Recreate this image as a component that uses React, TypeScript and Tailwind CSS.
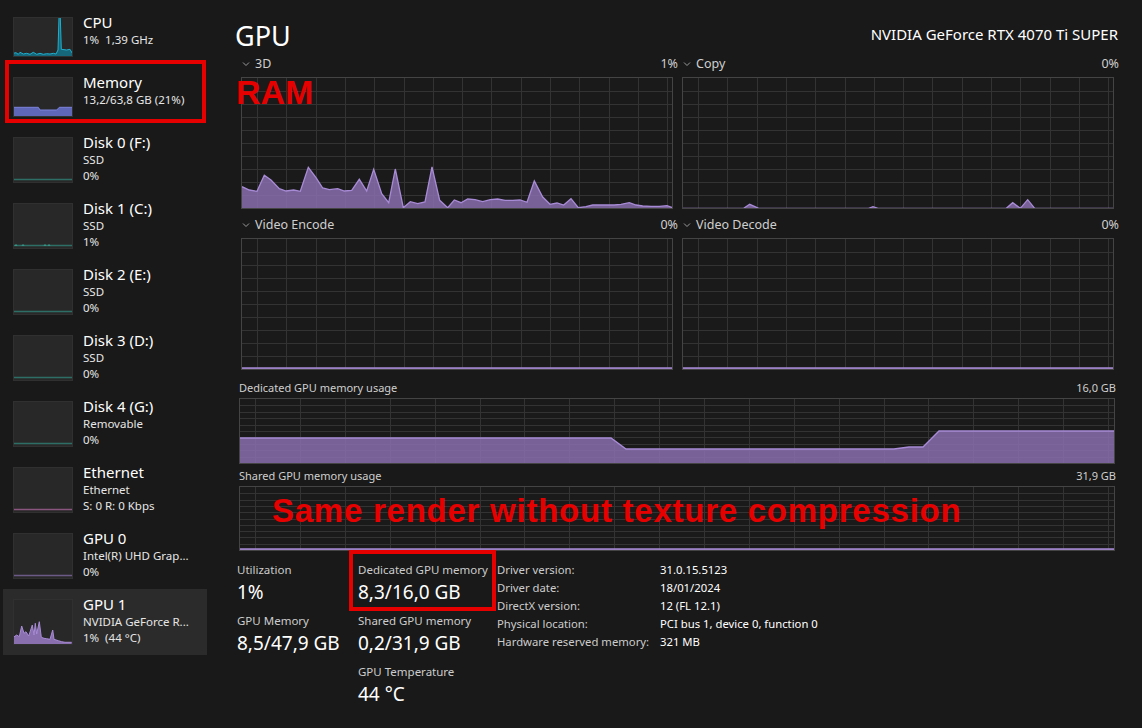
import React from "react";

const FONT = { fontFamily: '"Noto Sans", "Open Sans", sans-serif' };

type Pt = [number, number];

function toPath(pts: Pt[], h: number) {
  const line = pts.map((p, i) => `${i ? "L" : "M"}${p[0].toFixed(1)} ${p[1].toFixed(1)}`).join(" ");
  const fill = `${line} L${pts[pts.length - 1][0].toFixed(1)} ${h} L${pts[0][0].toFixed(1)} ${h} Z`;
  return { line, fill };
}

// graph grid used by the big charts
function Grid({ w, h, step, offset, rows }: { w: number; h: number; step: number; offset: number; rows: number }) {
  const v: number[] = [];
  for (let x = offset; x < w - 1; x += step) v.push(Math.round(x) + 0.5);
  const hz: number[] = [];
  for (let i = 1; i < rows; i++) hz.push(Math.round((h / rows) * i) + 0.5);
  return (
    <g stroke="#333333" strokeWidth="1">
      {v.map((x) => (
        <line key={"v" + x} x1={x} y1={0} x2={x} y2={h} />
      ))}
      {hz.map((y) => (
        <line key={"h" + y} x1={0} y1={y} x2={w} y2={y} />
      ))}
    </g>
  );
}

function Chart({ w, h, step, pts, rows = 10 }: { w: number; h: number; step: number; pts?: Pt[]; rows?: number }) {
  const p = pts ? toPath(pts, h) : null;
  return (
    <div className="border border-[#444444] bg-[#1a1a1a]" style={{ width: w + 2, height: h + 2 }}>
      <svg width={w} height={h} className="block">
        <Grid w={w} h={h} step={step} offset={15} rows={rows} />
        {p && (
          <>
            <path d={p.fill} fill="#8a6fae" fillOpacity="0.85" />
            <path d={p.line} fill="none" stroke="#a88bd6" strokeWidth="1.3" />
          </>
        )}
      </svg>
    </div>
  );
}

const p3d: Pt[] = ([
  [63, 557], [85, 567], [108, 571], [130, 523], [150, 537], [175, 563], [195, 570], [218, 567], [238, 571],
  [262, 499], [285, 530], [305, 561], [325, 566], [350, 563], [370, 570], [392, 568], [415, 535], [437, 570],
  [458, 505], [482, 578], [503, 605], [523, 504], [547, 620], [568, 602], [590, 608], [612, 603], [633, 498],
  [656, 598], [680, 620], [700, 597], [720, 605], [740, 594], [762, 596], [785, 602], [808, 596], [830, 594],
  [852, 598], [875, 598], [897, 597], [918, 604], [940, 540], [965, 588], [987, 610], [1008, 606], [1028, 612],
  [1050, 593], [1072, 620], [1095, 617], [1115, 612], [1140, 612], [1180, 612], [1200, 610], [1225, 605],
  [1245, 612], [1265, 615], [1290, 616], [1315, 616], [1338, 614], [1355, 620],
] as Pt[]).map(([x, y]) => [x / 3 - 21, y / 3 - 77] as Pt);

const pCopy: Pt[] = ([
  [33, 622], [215, 622], [233, 610], [260, 622], [590, 622], [603, 617], [618, 622], [1003, 622], [1022, 605],
  [1045, 622], [1067, 596], [1088, 622], [1330, 622],
] as Pt[]).map(([x, y]) => [x / 3 - 11, y / 3 - 77] as Pt);

const pFlat = (w: number, h: number): Pt[] => [[0, h - 1], [w, h - 1]];

const pDedicated: Pt[] = [
  [0, 39], [371, 39], [386, 50], [654, 50], [669, 48], [683, 48], [699, 32], [876, 32],
];

function Thumb({ h, children }: { h: number; children?: React.ReactNode }) {
  return (
    <div className="w-[60px] shrink-0 bg-[#282828] border border-[#303030]" style={{ height: h }}>
      <svg width={58} height={h - 2} className="block">
        {children}
      </svg>
    </div>
  );
}

function Area({ pts, h, fill, stroke }: { pts: Pt[]; h: number; fill: string; stroke: string }) {
  const p = toPath(pts, h);
  return (
    <>
      <path d={p.fill} fill={fill} />
      <path d={p.line} fill="none" stroke={stroke} strokeWidth="1" />
    </>
  );
}

const cpuPts: Pt[] = ([
  [40, 160], [48, 158], [55, 163], [60, 157], [70, 162], [80, 160], [90, 163], [100, 157], [110, 163], [120, 160],
  [130, 163], [140, 161], [150, 162], [160, 160], [168, 162], [174, 150], [177, 52], [181, 52], [184, 148],
  [200, 150], [210, 148], [217, 160],
] as Pt[]).map(([x, y]) => [x / 3 - 14, y / 3 - 18] as Pt);

const memPts: Pt[] = ([
  [40, 322], [115, 322], [120, 330], [170, 330], [178, 322], [217, 322],
] as Pt[]).map(([x, y]) => [x / 3 - 14, y / 3 - 78] as Pt);

const gpu1Pts: Pt[] = ([
  [40, 352], [50, 345], [58, 350], [65, 318], [72, 340], [78, 335], [86, 348], [92, 330], [97, 315], [102, 345],
  [106, 310], [110, 342], [118, 305], [124, 352], [132, 355], [140, 356], [150, 358], [158, 330], [162, 358],
  [175, 362], [185, 365], [195, 367], [215, 367],
] as Pt[]).map(([x, y]) => [x / 3 - 14, y / 3 - 80] as Pt);

function BottomLine({ h, color }: { h: number; color: string }) {
  return <line x1={0} y1={h - 2.5} x2={58} y2={h - 2.5} stroke={color} strokeWidth="1.5" />;
}

type Item = {
  title: string;
  lines: string[];
  thumb: React.ReactNode;
  selected?: boolean;
  boxed?: boolean;
};

const items: Item[] = [
  {
    title: "CPU",
    lines: ["1%  1,39 GHz"],
    thumb: (
      <Thumb h={40}>
        <Area pts={cpuPts} h={38} fill="#16677a" stroke="#1fb0cf" />
      </Thumb>
    ),
  },
  {
    title: "Memory",
    lines: ["13,2/63,8 GB (21%)"],
    boxed: true,
    thumb: (
      <Thumb h={40}>
        <Area pts={memPts} h={38} fill="#5f67b8" stroke="#7c84dc" />
      </Thumb>
    ),
  },
  { title: "Disk 0 (F:)", lines: ["SSD", "0%"], thumb: <Thumb h={46}><BottomLine h={44} color="#2d6f66" /></Thumb> },
  {
    title: "Disk 1 (C:)",
    lines: ["SSD", "1%"],
    thumb: (
      <Thumb h={46}>
        <BottomLine h={44} color="#2d6f66" />
        <path d="M1 42 L2 40.5 L3 42 M8 42 L9 40.5 L10 42 M30 42 L31 40.5 L32 42 M34 42 L35 40.5 L36 42" stroke="#3b9a8c" fill="none" />
      </Thumb>
    ),
  },
  { title: "Disk 2 (E:)", lines: ["SSD", "0%"], thumb: <Thumb h={46}><BottomLine h={44} color="#2d6f66" /></Thumb> },
  { title: "Disk 3 (D:)", lines: ["SSD", "0%"], thumb: <Thumb h={46}><BottomLine h={44} color="#2d6f66" /></Thumb> },
  { title: "Disk 4 (G:)", lines: ["Removable", "0%"], thumb: <Thumb h={46}><BottomLine h={44} color="#2d6f66" /></Thumb> },
  { title: "Ethernet", lines: ["Ethernet", "S: 0 R: 0 Kbps"], thumb: <Thumb h={46}><BottomLine h={44} color="#8a557e" /></Thumb> },
  { title: "GPU 0", lines: ["Intel(R) UHD Grap...", "0%"], thumb: <Thumb h={46}><BottomLine h={44} color="#6c5a86" /></Thumb> },
  {
    title: "GPU 1",
    lines: ["NVIDIA GeForce R...", "1%  (44 °C)"],
    selected: true,
    thumb: (
      <Thumb h={46}>
        <Area pts={gpu1Pts} h={44} fill="#8a6fae" stroke="#a88bd6" />
      </Thumb>
    ),
  },
];

function Chevron() {
  return (
    <svg width="8" height="6" className="shrink-0">
      <path d="M1 1.5 L4 4.5 L7 1.5" stroke="#9a9a9a" strokeWidth="1" fill="none" />
    </svg>
  );
}

function ChartLabel({ name, value }: { name: string; value: string }) {
  return (
    <div className="flex items-center h-[16px] text-[12.5px] text-[#cfcfcf]">
      <div className="flex items-center gap-[5px] pl-[3px]">
        <Chevron />
        <span>{name}</span>
      </div>
      <span className="ml-auto -mr-[3px]">{value}</span>
    </div>
  );
}

function Stat({ label, value }: { label: string; value: string }) {
  return (
    <div className="flex flex-col">
      <span className="text-[11.5px] leading-[16px] text-[#cccccc]">{label}</span>
      <span className="text-[19px] leading-[26px] text-white mt-[1px]">{value}</span>
    </div>
  );
}

export default function App() {
  return (
    <div className="relative w-[1142px] h-[728px] bg-[#191919] text-white overflow-hidden flex" style={FONT}>
      {/* sidebar */}
      <div className="w-[220px] shrink-0 pt-[7px] flex flex-col">
        {items.map((it) => (
          <div
            key={it.title}
            className={
              "relative mx-[3px] w-[204px] flex gap-[10px] pl-[10px] " +
              (it.lines.length === 1 ? "h-[60px] pt-[10px]" : "h-[66px] pt-[10px]") +
              (it.selected ? " bg-[#2b2b2b]" : "")
            }
          >
            {it.thumb}
            <div className="flex flex-col -mt-[5px]">
              <span className="text-[15px] leading-[20px]">{it.title}</span>
              {it.lines.map((l) => (
                <span key={l} className="text-[11.5px] leading-[16px] text-[#e6e6e6] whitespace-pre">
                  {l}
                </span>
              ))}
            </div>
            {it.boxed && (
              <div className="absolute left-[2px] -top-[7px] w-[201px] h-[63px] border-[4px] border-[#e60000]" />
            )}
          </div>
        ))}
      </div>

      {/* main panel */}
      <div className="flex-1 flex flex-col pl-[19px] pr-[26px]">
        <div className="flex items-end justify-between h-[55px]">
          <span className="text-[27px] leading-[34px] -ml-[4px] mb-[2px]">GPU</span>
          <span className="text-[15px] leading-[20px] mb-[11px] -mr-[2px]">NVIDIA GeForce RTX 4070 Ti SUPER</span>
        </div>

        <div className="grid grid-cols-2 gap-x-[5px] mt-[1px]">
          <div className="flex flex-col">
            <ChartLabel name="3D" value="1%" />
            <div className="mt-[5px] ml-[2px]">
              <Chart w={430} h={130} step={29.3} pts={p3d} />
            </div>
          </div>
          <div className="flex flex-col">
            <ChartLabel name="Copy" value="0%" />
            <div className="mt-[5px] ml-[2px]">
              <Chart w={430} h={130} step={29.3} pts={pCopy} />
            </div>
          </div>
          <div className="flex flex-col mt-[8px]">
            <ChartLabel name="Video Encode" value="0%" />
            <div className="mt-[5px] ml-[2px]">
              <Chart w={430} h={130} step={29.3} pts={pFlat(430, 130)} />
            </div>
          </div>
          <div className="flex flex-col mt-[8px]">
            <ChartLabel name="Video Decode" value="0%" />
            <div className="mt-[5px] ml-[2px]">
              <Chart w={430} h={130} step={29.3} pts={pFlat(430, 130)} />
            </div>
          </div>
        </div>

        <div className="flex justify-between text-[11px] leading-[14px] text-[#cfcfcf] mt-[11px]">
          <span>Dedicated GPU memory usage</span>
          <span>16,0 GB</span>
        </div>
        <div className="mt-[3px]">
          <Chart w={874} h={64} step={44.9} pts={pDedicated} />
        </div>
        <div className="flex justify-between text-[11px] leading-[14px] text-[#cfcfcf] mt-[5px]">
          <span>Shared GPU memory usage</span>
          <span>31,9 GB</span>
        </div>
        <div className="mt-[3px]">
          <Chart w={874} h={63} step={44.9} pts={pFlat(874, 63)} />
        </div>

        {/* stats */}
        <div className="flex items-start mt-[11px] -ml-[2px]">
          <div className="w-[121px] flex flex-col gap-[8px]">
            <Stat label="Utilization" value="1%" />
            <Stat label="GPU Memory" value="8,5/47,9 GB" />
          </div>
          <div className="relative w-[139px] flex flex-col gap-[8px]">
            <Stat label="Dedicated GPU memory" value="8,3/16,0 GB" />
            <Stat label="Shared GPU memory" value="0,2/31,9 GB" />
            <Stat label="GPU Temperature" value="44 °C" />
            <div className="absolute -left-[9px] -top-[12px] w-[147px] h-[61px] border-[4px] border-[#e60000]" />
          </div>
          <div className="grid grid-cols-[163px_auto] text-[11.3px] leading-[18px] text-[#cccccc] -mt-[1px]">
            <span>Driver version:</span>
            <span className="text-white">31.0.15.5123</span>
            <span>Driver date:</span>
            <span className="text-white">18/01/2024</span>
            <span>DirectX version:</span>
            <span className="text-white">12 (FL 12.1)</span>
            <span>Physical location:</span>
            <span className="text-white">PCI bus 1, device 0, function 0</span>
            <span>Hardware reserved memory:</span>
            <span className="text-white">321 MB</span>
          </div>
        </div>
      </div>

      {/* annotations */}
      <span
        className="absolute left-[236px] top-[75px] text-[34px] leading-none font-bold text-[#e60000]"
        style={{ fontFamily: '"Liberation Sans", Arial, sans-serif' }}
      >
        RAM
      </span>
      <span
        className="absolute left-[272px] top-[494px] text-[33px] leading-none font-bold tracking-[0.75px] text-[#e60000] whitespace-nowrap"
        style={{ fontFamily: '"Liberation Sans", Arial, sans-serif' }}
      >
        Same render without texture compression
      </span>
    </div>
  );
}
